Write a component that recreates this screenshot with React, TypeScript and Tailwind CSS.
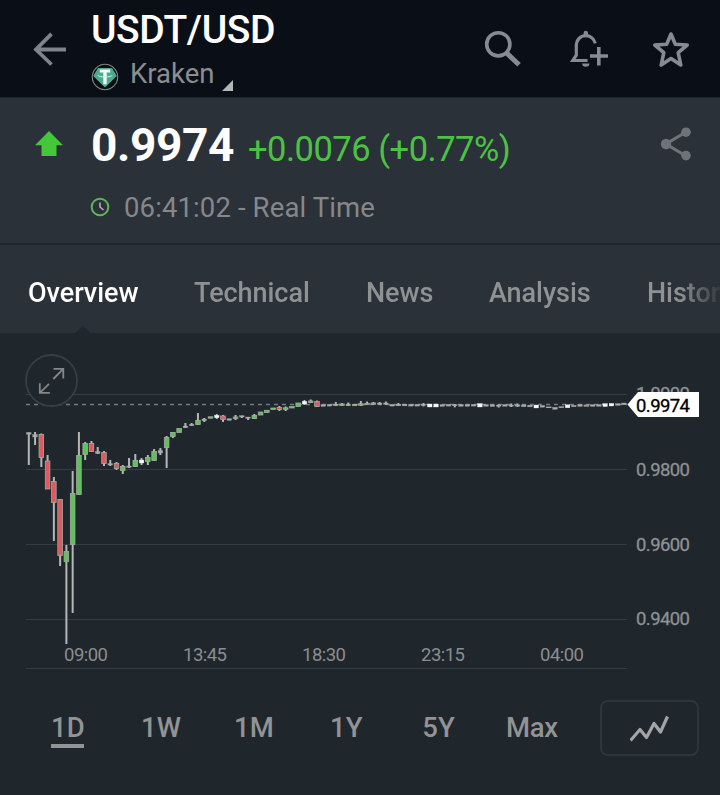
import { useState } from 'react'
import clsx from 'clsx'

type Candle = {
  open: number
  close: number
  high?: number
  low?: number
  color: string
}

const GREEN = '#5cc357'
const RED = '#dd5a5e'
const GREY = '#a9adab'
const WHITE = '#f4f6f5'

const tabs = [
  { label: 'Overview', className: 'w-[110px] ml-7' },
  { label: 'Technical', className: 'w-[115px] ml-14' },
  { label: 'News', className: 'w-[67px] ml-[57px]' },
  { label: 'Analysis', className: 'w-[102px] ml-[56px]' },
  { label: 'Historical Data', className: 'ml-[56px]' },
]

const ranges = [
  { label: '1D', className: 'w-[33px] ml-[51px]' },
  { label: '1W', className: 'w-[38px] ml-[57px]' },
  { label: '1M', className: 'w-[38px] ml-[55px]' },
  { label: '1Y', className: 'w-[32px] ml-[58px]' },
  { label: '5Y', className: 'w-[33px] ml-[60px]' },
  { label: 'Max', className: 'w-[52px] ml-[51px] tracking-[-0.3px]' },
]

const gridLines = [394.5, 469.5, 544.5, 619.5, 668.5]

const priceLabels = [
  { label: '1.0000', y: 400 },
  { label: '0.9800', y: 475.5 },
  { label: '0.9600', y: 550.5 },
  { label: '0.9400', y: 624.5 },
]

const timeLabels = [
  { label: '09:00', x: 86 },
  { label: '13:45', x: 205 },
  { label: '18:30', x: 324 },
  { label: '23:15', x: 443 },
  { label: '04:00', x: 562 },
]

const c = (color: string, open: number, close: number, high?: number, low?: number): Candle => ({
  color,
  open,
  close,
  high,
  low,
})

const flat = (y: number) => c(GREY, y - 0.9, y + 0.9)

const candles: Candle[] = [
  c(GREY, 432.5, 434.3, 432.5, 465),
  c(GREY, 434.5, 437, 432, 445),
  c(RED, 434.5, 457.5, 433.5, 467),
  c(RED, 461, 489, 455, 489),
  c(RED, 481.5, 502.5, 477, 541),
  c(RED, 499.5, 555.5, 499, 566),
  c(GREEN, 551.5, 561.5, 545, 644),
  c(GREEN, 493.5, 544.5, 471, 613),
  c(GREEN, 455.5, 494.5, 432, 495),
  c(GREEN, 443.5, 454.5, 442, 460),
  c(RED, 443.5, 451.5, 441, 452),
  c(GREY, 451.5, 453.5, 447, 454),
  c(RED, 452.5, 463.5, 451, 466),
  c(GREY, 463.5, 465, 460, 466),
  c(RED, 463.5, 468.5, 462, 470),
  c(GREEN, 466.5, 470.5, 465, 474),
  c(GREY, 466, 467.3, 458, 468),
  c(GREEN, 460.5, 466.5, 454, 467),
  c(WHITE, 460, 463, 458, 465),
  c(GREEN, 457.5, 461.5, 455, 465),
  c(GREEN, 451.5, 460.5, 449, 461),
  c(GREY, 450.5, 453, 448, 455),
  c(GREEN, 437.5, 447.5, 436, 468),
  c(GREEN, 432.5, 436.5, 432, 438),
  c(GREEN, 428.5, 432.5),
  c(GREY, 426, 427.8, 423, 428),
  c(GREY, 424.3, 425.7, 423, 426),
  c(GREEN, 420.5, 424.5, 413, 425),
  c(GREY, 419, 420.8, 418, 422),
  c(GREEN, 416.8, 418.2),
  c(WHITE, 415.3, 417.7, 414, 419),
  c(RED, 416, 419.5, 415, 422),
  flat(419.5),
  c(GREEN, 417, 418.5, 415, 420),
  c(GREY, 415.8, 417, 415.5, 418),
  c(GREY, 417, 418.3, 417, 420),
  c(GREEN, 415.5, 418.5, 414, 419),
  c(GREEN, 412, 415),
  c(GREEN, 410.3, 412.5),
  c(GREEN, 408, 409.5),
  c(RED, 407.5, 409.5, 406, 411),
  c(GREEN, 407.8, 409.3, 406.5, 411),
  c(GREEN, 406.5, 408),
  c(GREEN, 403, 406.5),
  c(WHITE, 401.3, 404, 400, 405),
  c(GREEN, 401, 402.5, 399.5, 403),
  c(RED, 401.5, 406.5, 400.5, 407),
  flat(405.5),
  flat(405.2),
  c(GREY, 404.2, 405.8, 402, 406),
  c(GREEN, 404, 405.3, 403, 406),
  c(GREY, 404.2, 405.8, 402.5, 406),
  flat(405),
  c(GREEN, 403.8, 405.2, 401, 406),
  c(RED, 403.5, 404.5, 401.5, 405),
  c(GREEN, 403, 404.2, 402, 405),
  c(GREY, 403, 404.3, 402, 405),
  c(GREY, 403, 404.3, 401.5, 405),
  flat(405.2),
  c(GREEN, 404.5, 405.5, 403, 406),
  flat(405),
  flat(405.2),
  flat(405.2),
  c(GREY, 404.2, 405.5, 403, 406.5),
  c(WHITE, 404, 407),
  c(WHITE, 404, 407),
  flat(405.5),
  flat(405.2),
  c(GREY, 404.5, 405.8, 404, 407.3),
  flat(405.4),
  flat(405.4),
  flat(405.2),
  c(WHITE, 403.5, 407),
  flat(405.4),
  flat(405.6),
  c(GREY, 405, 406.2, 404.5, 407.5),
  flat(405.4),
  c(GREY, 405, 406.2, 403.5, 407),
  c(GREEN, 405, 406, 403.5, 407),
  flat(405.8),
  flat(406),
  c(WHITE, 405, 408),
  flat(406.3),
  c(GREEN, 407, 407.6),
  c(GREY, 407.3, 409.3),
  c(GREEN, 406.8, 407.6),
  c(WHITE, 404.8, 407.8),
  c(GREY, 405.3, 406.8),
  flat(405.5),
  c(RED, 405, 406.2),
  flat(405.5),
  flat(405.4),
  c(WHITE, 403.6, 406.6),
  c(WHITE, 403.4, 406),
  flat(404.5),
  c(GREY, 403, 404.8),
]

const BackIcon = () => (
  <svg className="w-[34px] h-[34px]" viewBox="0 0 34 34" fill="none" stroke="#7e848b" strokeWidth="3.8">
    <path d="M33 17.5H3.5M18.5 1.8L3 17.5L18.5 32.5" />
  </svg>
)

const TetherIcon = () => (
  <svg className="w-[28px] h-[28px]" viewBox="0 0 28 28">
    <circle cx="14" cy="14" r="12.7" fill="#0b0d10" stroke="#7f8b88" strokeWidth="1.1" />
    <path d="M7 5h14l4.8 8L14 24.5L2.2 13z" fill="#4bab8f" />
    <path d="M8.8 6.6h10.4v3h-3.5v11.6h-3.4V9.6H8.8z" fill="#f1faf6" />
    <path d="M7 12.3c0 2.2 14 2.2 14 0" fill="none" stroke="#d4eee4" strokeWidth="1" />
  </svg>
)

const SearchIcon = () => (
  <svg className="w-[38px] h-[38px]" viewBox="0 0 38 38" fill="none" stroke="#868b92">
    <circle cx="14.3" cy="14.3" r="11.6" strokeWidth="3.6" />
    <path d="M23 23.3L35 34.8" strokeWidth="5" />
  </svg>
)

const BellIcon = () => (
  <svg className="w-[38px] h-[38px]" viewBox="0 0 38 38" fill="none" stroke="#868b92" strokeWidth="3.2">
    <path d="M25.3 13.3C24 8.5 20 5.6 15.8 5.6C10 5.6 6.3 10.2 6.3 16v9.2L2.8 30.5H17.5" />
    <path d="M15.8 5V2.9" strokeWidth="4.4" strokeLinecap="round" />
    <path d="M12.2 33.5h7.2a3.6 3.2 0 0 1-7.2 0z" fill="#868b92" stroke="none" />
    <path d="M28.8 17v18.5M20 26h18" strokeWidth="3.6" />
  </svg>
)

const StarIcon = () => (
  <svg className="w-[38px] h-[38px]" viewBox="0 0 38 38" fill="none" stroke="#868b92" strokeWidth="3.6" strokeLinejoin="round">
    <path d="M19 4L23.3 14.2L35.2 15L26.2 22.6L28.8 35L19 28.5L9.2 35L11.8 22.6L2.8 15L14.7 14.2z" />
  </svg>
)

const ShareIcon = () => (
  <svg className="w-[32px] h-[36px]" viewBox="0 0 32 36" fill="#6e737a" stroke="#6e737a">
    <path d="M26 6L6 18L26 30" fill="none" strokeWidth="3.2" />
    <circle cx="26" cy="6.2" r="4.8" stroke="none" />
    <circle cx="6" cy="18" r="5.2" stroke="none" />
    <circle cx="26" cy="29.6" r="4.8" stroke="none" />
  </svg>
)

const ClockIcon = () => (
  <svg className="w-5 h-5" viewBox="0 0 20 20" fill="none">
    <circle cx="10" cy="10" r="8.3" stroke="#5cb656" strokeWidth="2" />
    <path d="M10 5.5V10L13.5 13" stroke="#b9a9bd" strokeWidth="1.6" />
  </svg>
)

const Chart = () => (
  <svg className="block w-[720px] h-[347px] overflow-visible" viewBox="0 333 720 347">
    <path d="M75 333.5L83 325.5L91 333.5z" fill="#1f262c" />

    {gridLines.map(y => (
      <line key={y} x1="26" x2="627" y1={y} y2={y} stroke="#343d43" />
    ))}
    <line x1="26" x2="627" y1="404.5" y2="404.5" stroke="#757a7d" strokeWidth="1.3" strokeDasharray="4 4" />

    <circle cx="51.5" cy="380.5" r="25.5" fill="#1f262c" stroke="#363e46" strokeWidth="1.8" />
    <path
      d="M53.5 368.8H63.3V378.6M63.3 368.8L53.3 379M39.8 383.2V392.8H49.8M39.8 392.8L49 383.8"
      fill="none"
      stroke="#858789"
      strokeWidth="1.8"
    />

    {candles.map((candle, index) => {
      const x = 28.8 + index * 6.265
      const { open, close, high, low, color } = candle

      return (
        <g key={index}>
          {high !== undefined && <line x1={x} x2={x} y1={high} y2={low} stroke="#b4b7b5" strokeWidth="2" />}
          <rect
            x={x - 2.3}
            y={open}
            width="4.6"
            height={close - open}
            fill={color}
            stroke={color === GREEN || color === RED ? '#a3aba3' : color}
            strokeWidth={color === GREEN || color === RED ? 0.8 : 0.3}
          />
        </g>
      )
    })}

    <g fontFamily="Roboto, sans-serif" fill="#8f9192">
      {priceLabels.map(({ label, y }) => (
        <text key={label} x="636" y={y} fontSize="18.5" textLength="54" stroke="#8f9192" strokeWidth="0.3">
          {label}
        </text>
      ))}
      {timeLabels.map(({ label, x }) => (
        <text key={label} x={x - 22} y="661.3" fontSize="18.5" textLength="44" fill="#8b8d8e">
          {label}
        </text>
      ))}
    </g>

    <path d="M627.5 404.5L638 392H699V417H638z" fill="#fff" />
    <text x="636" y="411.6" fontFamily="Roboto, sans-serif" fontSize="18.5" textLength="54" fill="#000" stroke="#000" strokeWidth="0.3">
      0.9974
    </text>
  </svg>
)

export default function App() {
  const [activeTab, setActiveTab] = useState('Overview')
  const [range, setRange] = useState('1D')

  return (
    <div className="flex flex-col w-[720px] h-[795px] overflow-hidden bg-[#1f262c] font-[Roboto,sans-serif]">
      <header className="flex h-[98px] shrink-0 bg-[#0a0f17] border-b border-[#1d232b]">
        <button className="self-start mt-8 ml-[33px]">
          <BackIcon />
        </button>

        <div className="ml-6 pt-[9px]">
          <h1 className="text-[39px] leading-[42px] font-medium text-white tracking-[-0.4px]">USDT/USD</h1>
          <div className="flex h-9 mt-[5px]">
            <div className="mt-[7px]">
              <TetherIcon />
            </div>
            <span className="ml-[11px] text-[27.5px] leading-9 text-[#8b8d8f]">Kraken</span>
            <svg className="w-[11px] h-[11px] ml-[8px] mt-[24px]" viewBox="0 0 11 11">
              <path d="M11 0V11H0z" fill="#b5b6b8" />
            </svg>
          </div>
        </div>

        <div className="flex ml-auto mr-[30px] mt-[30px] h-[38px]">
          <SearchIcon />
          <div className="ml-[48px] mr-[44px]">
            <BellIcon />
          </div>
          <StarIcon />
        </div>
      </header>

      <section className="flex h-[147px] shrink-0 bg-[#2b3138] border-b-2 border-[#20262c]">
        <svg className="w-7 h-[25px] ml-[35px] mt-[33px]" viewBox="0 0 28 25">
          <path d="M14 0L28 14.3H21.5V25H6.5V14.3H0z" fill="#43c83a" />
        </svg>

        <div className="ml-7 pt-5">
          <div className="flex items-baseline h-[54px]">
            <span className="text-[46px] leading-[54px] font-bold text-white tracking-[-0.4px]">0.9974</span>
            <span className="ml-[14px] text-[34.5px] text-[#4bc243] tracking-[-0.48px]">+0.0076 (+0.77%)</span>
          </div>
          <div className="flex items-center mt-[18px] h-9">
            <div className="mb-[3px] -ml-px">
              <ClockIcon />
            </div>
            <span className="ml-[14px] text-[27.5px] leading-9 text-[#85888b] tracking-[0.12px]">06:41:02 - Real Time</span>
          </div>
        </div>

        <div className="ml-auto mr-[28px] mt-7">
          <ShareIcon />
        </div>
      </section>

      <nav className="flex h-[88px] shrink-0 bg-[#2b3138] pt-2 overflow-hidden [mask-image:linear-gradient(#000,#000)]">
        <div className="flex w-[720px] shrink-0 overflow-hidden [mask-image:linear-gradient(to_right,#000_680px,transparent_724px)]">
          {tabs.map(({ label, className }) => (
            <button
              key={label}
              onClick={() => setActiveTab(label)}
              className={clsx(
                'shrink-0 text-left text-[27px] font-medium whitespace-nowrap tracking-[-0.05px]',
                activeTab === label ? 'text-white' : 'text-[#8f9192]',
                className,
              )}
            >
              {label}
            </button>
          ))}
        </div>
      </nav>

      <div className="relative">
        <Chart />
      </div>

      <div className="flex pt-5">
        {ranges.map(({ label, className }) => (
          <button
            key={label}
            onClick={() => setRange(label)}
            className={clsx(
              'h-12 pt-[5px] text-center text-[27.5px] leading-[46px] font-medium text-[#929394] whitespace-nowrap',
              range === label && 'border-b-4 border-[#929394]',
              className,
            )}
          >
            {label}
          </button>
        ))}
        <button className="flex items-center justify-center w-[99px] h-14 ml-auto mr-[21px] rounded-lg border-2 border-[#2e353c]">
          <svg className="w-10 h-7" viewBox="0 0 40 28" fill="none" stroke="#a3a4a5" strokeWidth="3.2" strokeLinejoin="round">
            <path d="M0.5 26.5L10 15.5L16.5 23.5L24 9.5L30.5 18L37.5 2.5" />
          </svg>
        </button>
      </div>
    </div>
  )
}
